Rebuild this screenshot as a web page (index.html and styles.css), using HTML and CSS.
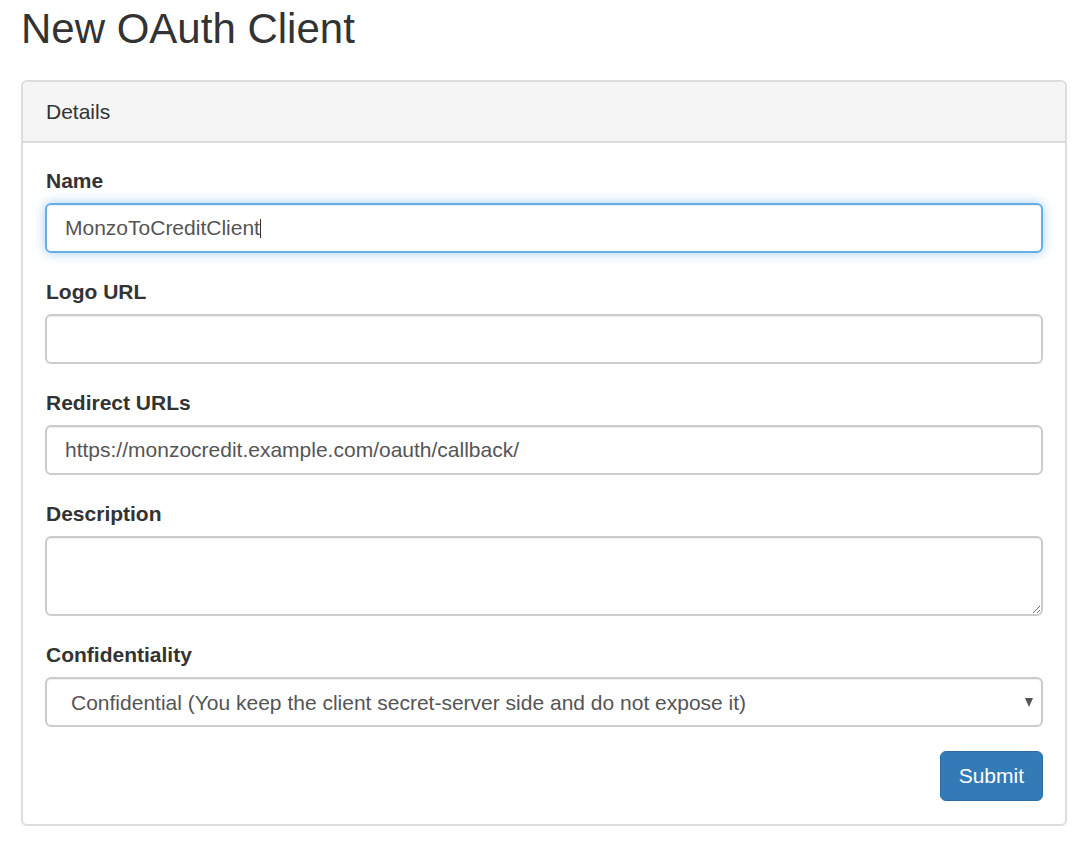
FILE: index.html
```html
<!DOCTYPE html>
<html lang="en">
<head>
<meta charset="utf-8">
<title>New OAuth Client</title>
<link rel="stylesheet" href="styles.css">
</head>
<body>
<div class="page">
  <h1 class="page-title">New OAuth Client</h1>
  <form class="panel" onsubmit="return false">
    <div class="panel-heading">Details</div>
    <div class="panel-body">
      <div class="form-group">
        <label class="control-label" for="name">Name</label>
        <div class="form-control is-focused" id="name" role="textbox">MonzoToCreditClient<span class="caret-line"></span></div>
      </div>
      <div class="form-group">
        <label class="control-label" for="logo">Logo URL</label>
        <input class="form-control" id="logo" type="text" value="">
      </div>
      <div class="form-group">
        <label class="control-label" for="redirect">Redirect URLs</label>
        <input class="form-control" id="redirect" type="text" value="https://monzocredit.example.com/oauth/callback/">
      </div>
      <div class="form-group">
        <label class="control-label" for="desc">Description</label>
        <textarea class="form-control textarea" id="desc"></textarea>
      </div>
      <div class="form-group">
        <label class="control-label" for="conf">Confidentiality</label>
        <div class="select-wrap">
          <select class="form-control select" id="conf">
            <option>Confidential (You keep the client secret-server side and do not expose it)</option>
            <option>Public</option>
          </select>
        </div>
      </div>
      <div class="actions">
        <button class="btn-primary" type="submit">Submit</button>
      </div>
    </div>
  </form>
</div>
</body>
</html>
```

FILE: styles.css
```css
* {
  box-sizing: border-box;
}

html, body {
  margin: 0;
  padding: 0;
  background: #fff;
}

body {
  font-family: "Liberation Sans", Arial, Helvetica, sans-serif;
  font-size: 21px;
  color: #333;
}

.page {
  padding: 6px 15px 0 21px;
}

.page-title {
  margin: 0 0 28px 0;
  font-size: 42px;
  line-height: 46px;
  font-weight: normal;
  color: #333;
}

.panel {
  display: block;
  margin: 0;
  border: 2px solid #ddd;
  border-radius: 6px;
  background: #fff;
}

.panel-heading {
  padding: 14.5px 22px 14.5px 23px;
  line-height: 30px;
  background: #f5f5f5;
  border-bottom: 2px solid #ddd;
  border-radius: 4px 4px 0 0;
  color: #333;
}

.panel-body {
  padding: 22px 22px 23px;
}

.form-group {
  display: flex;
  flex-direction: column;
  margin-bottom: 23px;
}

.control-label {
  display: block;
  line-height: 30px;
  margin-bottom: 8px;
  padding: 1px 0 0 1px;
  height: 30px;
  font-weight: bold;
  color: #333;
}

.form-control {
  display: block;
  width: 100%;
  height: 50px;
  margin: 0;
  padding: 0 18px;
  font-family: inherit;
  font-size: 21px;
  color: #555;
  background: #fff;
  border: 2px solid #ccc;
  border-radius: 6px;
  box-shadow: inset 0 1px 1px rgba(0, 0, 0, 0.075);
  outline: none;
}

div.form-control {
  display: flex;
  align-items: center;
  white-space: pre;
}

.form-control.is-focused {
  border-color: #66afe9;
  box-shadow: inset 0 1px 1px rgba(0, 0, 0, 0.075), 0 0 12px rgba(102, 175, 233, 0.6);
}

.caret-line {
  display: inline-block;
  width: 1px;
  height: 19px;
  margin-left: 0.5px;
  background: #333;
}

.textarea {
  height: 80px;
  padding: 9px 18px;
  resize: vertical;
}

.select-wrap {
  position: relative;
}

.select {
  -webkit-appearance: none;
  appearance: none;
  padding: 0 40px 0 24px;
}

.select-wrap::after {
  content: "";
  position: absolute;
  top: 21px;
  right: 10px;
  width: 0;
  height: 0;
  border-left: 4px solid transparent;
  border-right: 4px solid transparent;
  border-top: 9px solid #555;
  pointer-events: none;
}

.actions {
  display: flex;
  justify-content: flex-end;
  padding-top: 1px;
}

.btn-primary {
  height: 50px;
  padding: 0 18px;
  font-family: inherit;
  font-size: 21px;
  color: #fff;
  background: #337ab7;
  border: 1.5px solid #2e6da4;
  border-radius: 6px;
  cursor: pointer;
}
```
